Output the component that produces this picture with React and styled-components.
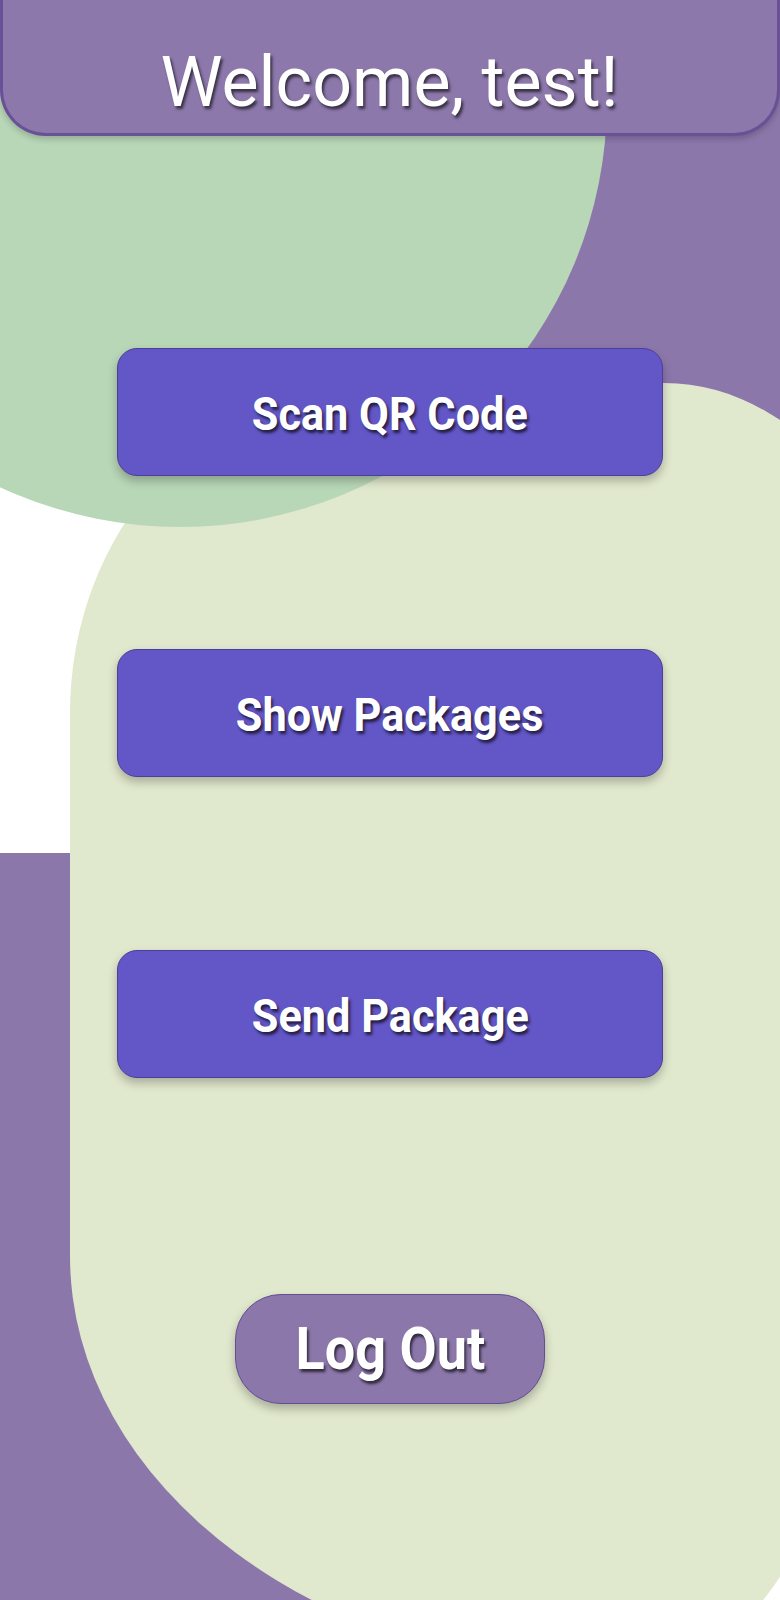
import React from 'react'
import styled, {createGlobalStyle} from 'styled-components'

const GlobalStyle = createGlobalStyle`
    html, body {
        margin: 0;
        padding: 0;
        background: #fff;
        font-family: Roboto, "Noto Sans", sans-serif;
    }
`

const Page = styled.div`
    position: relative;
    width: 780px;
    height: 1600px;
    overflow: hidden;
    background: #fff;
`

// decorative background blobs
const Backdrop = styled.div`
    position: absolute;
    inset: 0;
    z-index: 0;
`

const PurpleBlock = styled.div`
    position: absolute;
    background: #8c77ab;
    ${props => props.top ? 'left: 390px; top: 0; width: 390px; height: 853px;' : 'left: 0; top: 853px; width: 390px; height: 747px;'}
`

const PaleBlob = styled.div`
    position: absolute;
    left: 70px;
    top: 383px;
    width: 860px;
    height: 1293px;
    background: #e0e8cd;
    border-radius: 300px 266px 293px 567px / 330px 370px 780px 420px;
`

const GreenCircle = styled.div`
    position: absolute;
    left: -247px;
    top: -327px;
    width: 854px;
    height: 854px;
    border-radius: 50%;
    background: #b8d7b7;
`

const Content = styled.div`
    position: relative;
    z-index: 1;
    display: flex;
    flex-direction: column;
    align-items: center;
`

const Header = styled.header`
    box-sizing: border-box;
    width: 100%;
    height: 136px;
    display: flex;
    align-items: flex-end;
    justify-content: center;
    padding-bottom: 16px;
    background: #8c78ab;
    border: 3px solid #6a5096;
    border-top: none;
    border-radius: 0 0 46px 46px;
    box-shadow: 0 3px 6px rgba(0, 0, 0, 0.2);
`

const Title = styled.h1`
    margin: 0;
    display: inline-block;
    font-family: Roboto, sans-serif;
    font-weight: 400;
    font-size: 71px;
    line-height: 1;
    color: #fff;
    transform: scaleX(0.985);
    text-shadow: 2px 3px 3px rgba(0, 0, 0, 0.6);
`

const Menu = styled.nav`
    display: flex;
    flex-direction: column;
    align-items: center;
    gap: 173px;
    margin-top: 212px;
`

const ActionButton = styled.button`
    box-sizing: border-box;
    width: 546px;
    height: 128px;
    display: flex;
    align-items: center;
    justify-content: center;
    padding-top: 4px;
    background: #6356c7;
    border: 1.5px solid #4d3f99;
    border-radius: 20px;
    box-shadow: 0 5px 10px rgba(0, 0, 0, 0.25);
    cursor: pointer;
`

const LogOutButton = styled(ActionButton)`
    width: 310px;
    height: 110px;
    margin-top: 216px;
    padding-top: 0;
    background: #8c77ab;
    border-color: #664d93;
    border-radius: 46px;
`

const Label = styled.span`
    display: inline-block;
    font-family: Roboto, sans-serif;
    font-weight: 700;
    font-size: ${props => props.big ? '60px' : '46px'};
    color: #fff;
    transform: scaleX(${props => props.big ? 0.9 : 0.94});
    text-shadow: 2px 3px 3px rgba(0, 0, 0, 0.65);
`

const App = () => {
    return (
        <Page>
            <GlobalStyle/>
            <Backdrop>
                <PurpleBlock top/>
                <PurpleBlock/>
                <PaleBlob/>
                <GreenCircle/>
            </Backdrop>
            <Content>
                <Header>
                    <Title>Welcome, test!</Title>
                </Header>
                <Menu>
                    <ActionButton><Label>Scan QR Code</Label></ActionButton>
                    <ActionButton><Label>Show Packages</Label></ActionButton>
                    <ActionButton><Label>Send Package</Label></ActionButton>
                </Menu>
                <LogOutButton><Label big>Log Out</Label></LogOutButton>
            </Content>
        </Page>
    )
}

export default App
